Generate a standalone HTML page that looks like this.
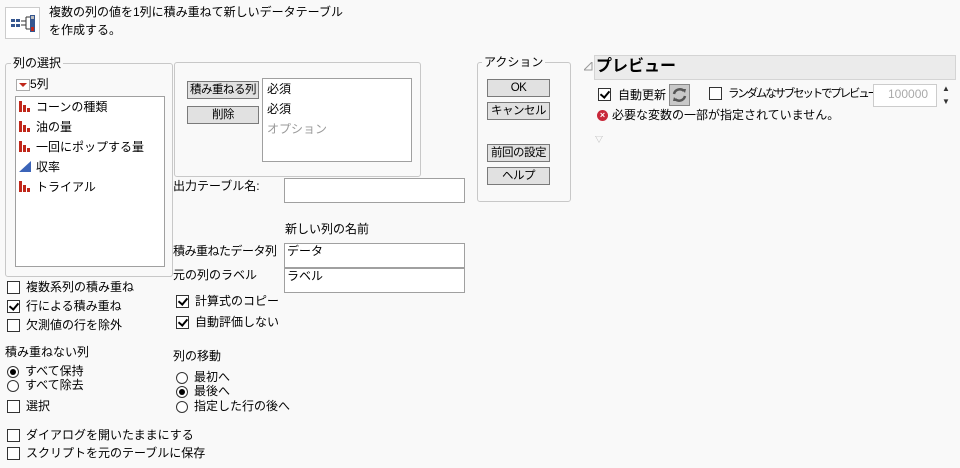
<html><head><style>
body{margin:0;width:960px;height:468px;background:#f9f9f9;font-family:"Liberation Sans","Noto Sans CJK JP",sans-serif;font-size:12px;color:#000;position:relative;overflow:hidden}
.a{position:absolute;white-space:nowrap;line-height:14px}
.g{position:absolute;border:1px solid #c8c8c8;border-radius:3px}
.lb{position:absolute;background:#f9f9f9;padding:0 2px;line-height:14px}
.box{position:absolute;background:#fff;border:1px solid #a0a0a0}
.btn{position:absolute;background:#e1e1e1;border:1px solid #7a7a7a;text-align:center;line-height:16px;font-size:11.5px;white-space:nowrap;letter-spacing:-0.5px;overflow:hidden}
.cb{position:absolute;width:11px;height:11px;border:1px solid #333;background:#fff}
.cb.on::after{content:"";position:absolute;left:3px;top:0px;width:4px;height:7px;border:solid #000;border-width:0 2px 2px 0;transform:rotate(40deg)}
.rd{position:absolute;width:10px;height:10px;border:1px solid #333;border-radius:50%;background:#fff}
.rd.on::after{content:"";position:absolute;left:2px;top:2px;width:6px;height:6px;border-radius:50%;background:#000}
.bar{position:absolute;width:3px;background:#c0281b;bottom:0}
</style></head><body>
<div style="position:absolute;left:5px;top:7px;width:33px;height:30px;border:1px solid #ccc;background:#fff">
<svg width="33" height="30"><rect x="5" y="11" width="4" height="3" fill="#35568f"/><rect x="10" y="11" width="4" height="3" fill="#35568f"/><rect x="5" y="16" width="4" height="3" fill="#35568f"/><rect x="10" y="16" width="4" height="3" fill="#35568f"/><path d="M15 13h5M15 17h5M20 9v12M20 9h4M20 21h4" stroke="#333" fill="none"/><rect x="24" y="7" width="5" height="17" fill="#35568f"/><rect x="25" y="8" width="3" height="3" fill="#bbb"/><rect x="25" y="19" width="3" height="4" fill="#c0281b"/></svg></div>
<div class="a" style="left:49px;top:5px">複数の列の値を1列に積み重ねて新しいデータテーブル</div>
<div class="a" style="left:49px;top:23px">を作成する。</div>

<div class="g" style="left:5px;top:63px;width:166px;height:212px"></div>
<div class="lb" style="left:11px;top:56px">列の選択</div>
<div style="position:absolute;left:16px;top:79px;width:12px;height:10px;border:1px solid #aaa;background:#fff"><div style="position:absolute;left:2px;top:3px;border:4px solid transparent;border-top:4px solid #c0281b"></div></div>
<div class="a" style="left:30px;top:77px">5列</div>
<div class="box" style="left:15px;top:96px;width:148px;height:169px"></div>
<div class="a" style="left:36px;top:100px">コーンの種類</div>
<div class="a" style="left:36px;top:120px">油の量</div>
<div class="a" style="left:36px;top:140px">一回にポップする量</div>
<div class="a" style="left:36px;top:160px">収率</div>
<div class="a" style="left:36px;top:180px">トライアル</div>
<div style="position:absolute;left:19px;top:101px;width:12px;height:11px"><div class="bar" style="left:0;height:11px"></div><div class="bar" style="left:4px;height:7px"></div><div class="bar" style="left:8px;height:4px"></div></div>
<div style="position:absolute;left:19px;top:121px;width:12px;height:11px"><div class="bar" style="left:0;height:11px"></div><div class="bar" style="left:4px;height:7px"></div><div class="bar" style="left:8px;height:4px"></div></div>
<div style="position:absolute;left:19px;top:141px;width:12px;height:11px"><div class="bar" style="left:0;height:11px"></div><div class="bar" style="left:4px;height:7px"></div><div class="bar" style="left:8px;height:4px"></div></div>
<svg style="position:absolute;left:19px;top:161px" width="13" height="12"><path d="M0 11L12 0V11Z" fill="#3b64b8"/></svg>
<div style="position:absolute;left:19px;top:181px;width:12px;height:11px"><div class="bar" style="left:0;height:11px"></div><div class="bar" style="left:4px;height:7px"></div><div class="bar" style="left:8px;height:4px"></div></div>

<div class="g" style="left:174px;top:62px;width:245px;height:113px"></div>
<div class="btn" style="left:187px;top:81px;width:70px">積み重ねる列</div>
<div class="btn" style="left:187px;top:106px;width:70px">削除</div>
<div class="box" style="left:262px;top:78px;width:148px;height:82px"></div>
<div class="a" style="left:267px;top:82px">必須</div>
<div class="a" style="left:267px;top:102px">必須</div>
<div class="a" style="left:267px;top:122px;color:#999">オプション</div>

<div class="a" style="left:173px;top:179px">出力テーブル名:</div>
<div class="box" style="left:284px;top:178px;width:179px;height:23px"></div>
<div class="a" style="left:285px;top:222px">新しい列の名前</div>
<div class="a" style="left:173px;top:244px;letter-spacing:-0.5px">積み重ねたデータ列</div>
<div class="box" style="left:284px;top:243px;width:179px;height:23px"></div>
<div class="a" style="left:287px;top:244px">データ</div>
<div class="a" style="left:173px;top:268px">元の列のラベル</div>
<div class="box" style="left:284px;top:268px;width:179px;height:23px"></div>
<div class="a" style="left:287px;top:269px">ラベル</div>

<div class="cb on" style="left:176px;top:295px"></div><div class="a" style="left:195px;top:294px">計算式のコピー</div>
<div class="cb on" style="left:176px;top:316px"></div><div class="a" style="left:195px;top:315px">自動評価しない</div>
<div class="a" style="left:173px;top:349px">列の移動</div>
<div class="rd" style="left:176px;top:372px"></div><div class="a" style="left:194px;top:370px">最初へ</div>
<div class="rd on" style="left:176px;top:386px"></div><div class="a" style="left:194px;top:384px">最後へ</div>
<div class="rd" style="left:176px;top:401px"></div><div class="a" style="left:194px;top:399px">指定した行の後へ</div>

<div class="cb" style="left:7px;top:281px"></div><div class="a" style="left:26px;top:280px">複数系列の積み重ね</div>
<div class="cb on" style="left:7px;top:300px"></div><div class="a" style="left:26px;top:299px">行による積み重ね</div>
<div class="cb" style="left:7px;top:319px"></div><div class="a" style="left:26px;top:318px">欠測値の行を除外</div>
<div class="a" style="left:5px;top:345px">積み重ねない列</div>
<div class="rd on" style="left:7px;top:366px"></div><div class="a" style="left:25px;top:364px">すべて保持</div>
<div class="rd" style="left:7px;top:380px"></div><div class="a" style="left:25px;top:378px">すべて除去</div>
<div class="cb" style="left:7px;top:400px"></div><div class="a" style="left:26px;top:399px">選択</div>
<div class="cb" style="left:7px;top:429px"></div><div class="a" style="left:26px;top:428px">ダイアログを開いたままにする</div>
<div class="cb" style="left:7px;top:447px"></div><div class="a" style="left:26px;top:446px">スクリプトを元のテーブルに保存</div>

<div class="g" style="left:477px;top:62px;width:92px;height:138px"></div>
<div class="lb" style="left:482px;top:55px">アクション</div>
<div class="btn" style="left:487px;top:79px;width:61px">OK</div>
<div class="btn" style="left:487px;top:102px;width:61px">キャンセル</div>
<div class="btn" style="left:487px;top:144px;width:61px">前回の設定</div>
<div class="btn" style="left:487px;top:167px;width:61px">ヘルプ</div>

<svg style="position:absolute;left:584px;top:62px" width="9" height="9"><path d="M0 8H8V0Z" fill="none" stroke="#999"/></svg>
<div style="position:absolute;left:594px;top:55px;width:360px;height:23px;background:#ebebeb;border:1px solid #d4d4d4"></div>
<div class="a" style="left:596px;top:58px;font-size:16px;font-weight:bold;line-height:18px">プレビュー</div>
<div class="cb on" style="left:598px;top:88px"></div><div class="a" style="left:618px;top:88px">自動更新</div>
<div style="position:absolute;left:669px;top:84px;width:19px;height:20px;background:#c8c8c8;border:1px solid #888"><svg width="19" height="20"><path d="M4 9a6 6 0 0 1 10-3M15 11a6 6 0 0 1-10 3" stroke="#555" stroke-width="2.5" fill="none"/><path d="M12 4l4 0l-1 4Z M7 16l-4 0l1-4Z" fill="#555"/></svg></div>
<div class="cb" style="left:709px;top:87px"></div><div class="a" style="left:728px;top:87px;font-size:11.5px;letter-spacing:-2.2px">ランダムなサブセットでプレビュー</div>
<div class="box" style="left:873px;top:84px;width:62px;height:21px;border-color:#ccc"></div>
<div class="a" style="left:888px;top:87px;color:#aaa">100000</div>
<div class="a" style="left:942px;top:82px;font-size:8px;color:#333">▲</div>
<div class="a" style="left:942px;top:95px;font-size:8px;color:#333">▼</div>
<div style="position:absolute;left:597px;top:110px;width:11px;height:11px;border-radius:50%;background:#c8283a;color:#fff;font-size:9px;line-height:11px;text-align:center;font-weight:bold">×</div>
<div class="a" style="left:612px;top:108px">必要な変数の一部が指定されていません。</div>
<div class="a" style="left:595px;top:133px;font-size:8px;color:#aaa">▽</div>
</body></html>
